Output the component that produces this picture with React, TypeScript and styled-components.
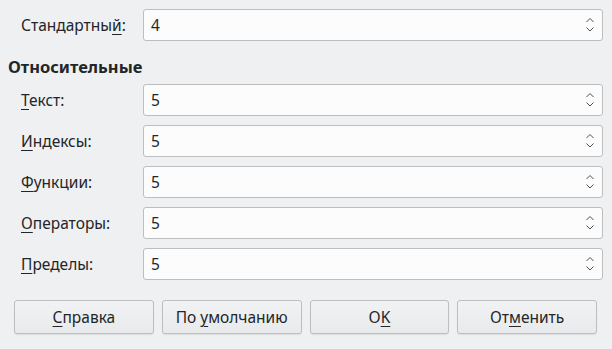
import React from "react";
import styled, { createGlobalStyle } from "styled-components";

const Global = createGlobalStyle`
  html, body { margin: 0; padding: 0; background: #eff0f1; }
  body { font-family: "Noto Sans", "DejaVu Sans", sans-serif; font-size: 15.5px; color: #232629; }
  * { box-sizing: border-box; }
`;

const Page = styled.div`
  width: 612px;
  height: 349px;
  display: flex;
  flex-direction: column;
  padding: 9px 9px 0 9px;
`;

const Row = styled.div`
  display: grid;
  grid-template-columns: 134px 1fr;
  align-items: center;
  height: 32px;
`;

const Label = styled.div`
  padding-left: 12px;
  white-space: nowrap;
  u { text-decoration: underline; text-underline-offset: 3px; text-decoration-thickness: 1px; }
`;

const Heading = styled.div`
  font-weight: bold;
  font-size: 16.5px;
  margin: 16px 0 7px -1px;
  height: 20px;
  line-height: 19px;
`;

const Rows = styled.div`
  display: flex;
  flex-direction: column;
  gap: 9px;
`;

const Spin = styled.div`
  height: 32px;
  background: #fcfcfc;
  border: 1px solid #bcbebf;
  border-radius: 3px;
  display: flex;
  align-items: center;
  padding: 0 7px 0 7px;
`;

const Value = styled.span`
  flex: 1;
`;

const Arrows = styled.svg`
  width: 10px;
  height: 16px;
`;

const Buttons = styled.div`
  display: flex;
  gap: 8px;
  margin: 20px 6px 0 5px;
`;

const Button = styled.div`
  flex: 1;
  height: 34px;
  border: 1px solid #bcbebf;
  border-radius: 3px;
  background: linear-gradient(#f1f2f3, #e9eaeb);
  box-shadow: 0 1px 1px rgba(0,0,0,0.08);
  display: flex;
  align-items: center;
  justify-content: center;
  u { text-decoration: underline; text-underline-offset: 3px; text-decoration-thickness: 1px; }
`;

const SpinBox = ({ value }: { value: string }) => (
  <Spin>
    <Value>{value}</Value>
    <Arrows viewBox="0 0 10 16">
      <path d="M1.5 5 L5 1.5 L8.5 5" fill="none" stroke="#4d4f52" strokeWidth="1" />
      <path d="M1.5 10.5 L5 14 L8.5 10.5" fill="none" stroke="#4d4f52" strokeWidth="1" />
    </Arrows>
  </Spin>
);

const items: [React.ReactNode, string][] = [
  [<><u>Т</u>екст:</>, "5"],
  [<><u>И</u>ндексы:</>, "5"],
  [<><u>Ф</u>ункции:</>, "5"],
  [<><u>О</u>ператоры:</>, "5"],
  [<><u>П</u>ределы:</>, "5"],
];

export default function App() {
  return (
    <>
      <Global />
      <Page>
        <Row>
          <Label>Стандартны<u>й</u>:</Label>
          <SpinBox value="4" />
        </Row>
        <Heading>Относительные</Heading>
        <Rows>
          {items.map(([l, v], i) => (
            <Row key={i}>
              <Label>{l}</Label>
              <SpinBox value={v} />
            </Row>
          ))}
        </Rows>
        <Buttons>
          <Button><span><u>С</u>правка</span></Button>
          <Button><span>По <u>у</u>молчанию</span></Button>
          <Button><span>O<u>K</u></span></Button>
          <Button><span>От<u>м</u>енить</span></Button>
        </Buttons>
      </Page>
    </>
  );
}
